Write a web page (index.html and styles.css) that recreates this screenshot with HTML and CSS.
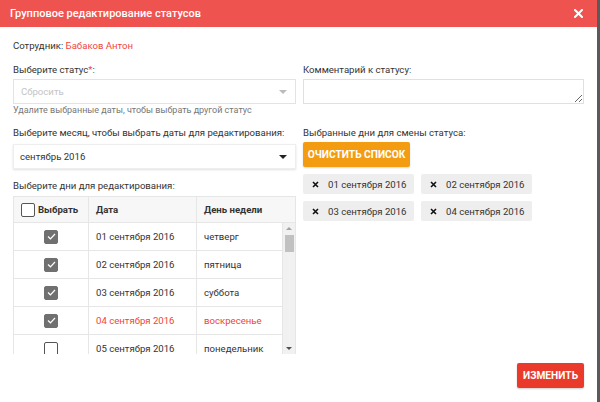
FILE: index.html
```html
<!DOCTYPE html>
<html lang="ru">
<head>
<meta charset="utf-8">
<link rel="stylesheet" href="styles.css">
</head>
<body>
<div class="modal">
  <div class="header">
    <div class="title">Групповое редактирование статусов</div>
    <svg class="close" width="9" height="9" viewBox="0 0 9 9"><path d="M1 1L8 8M8 1L1 8" stroke="#fff" stroke-width="2" stroke-linecap="square"/></svg>
  </div>
  <div class="content">
    <div class="employee">Сотрудник: <span class="red">Бабаков Антон</span></div>
    <div class="grid">
      <div class="col">
        <div class="label">Выберите статус<span class="red">*</span>:</div>
        <div class="select disabled"><span>Сбросить</span><span class="tri grey"></span></div>
        <div class="hint">Удалите выбранные даты, чтобы выбрать другой статус</div>
      </div>
      <div class="col">
        <div class="label">Комментарий к статусу:</div>
        <textarea class="textarea"></textarea>
      </div>
      <div class="col">
        <div class="label">Выберите месяц, чтобы выбрать даты для редактирования:</div>
        <div class="select month"><span>сентябрь 2016</span><span class="tri"></span></div>
        <div class="label days-label">Выберите дни для редактирования:</div>
        <div class="table">
          <div class="thead">
            <div class="c1 th"><span class="cb"></span>Выбрать</div>
            <div class="c2 th">Дата</div>
            <div class="c3h th">День недели</div>
          </div>
          <div class="tbody">
            <div class="rows">
              <div class="row"><div class="c1"><span class="cb checked"><svg width="9" height="7" viewBox="0 0 9 7"><path d="M1 3.5L3.4 5.8L8 1" fill="none" stroke="#fff" stroke-width="1.2"/></svg></span></div><div class="c2">01 сентября 2016</div><div class="c3">четверг</div></div>
              <div class="row"><div class="c1"><span class="cb checked"><svg width="9" height="7" viewBox="0 0 9 7"><path d="M1 3.5L3.4 5.8L8 1" fill="none" stroke="#fff" stroke-width="1.2"/></svg></span></div><div class="c2">02 сентября 2016</div><div class="c3">пятница</div></div>
              <div class="row"><div class="c1"><span class="cb checked"><svg width="9" height="7" viewBox="0 0 9 7"><path d="M1 3.5L3.4 5.8L8 1" fill="none" stroke="#fff" stroke-width="1.2"/></svg></span></div><div class="c2">03 сентября 2016</div><div class="c3">суббота</div></div>
              <div class="row weekend"><div class="c1"><span class="cb checked"><svg width="9" height="7" viewBox="0 0 9 7"><path d="M1 3.5L3.4 5.8L8 1" fill="none" stroke="#fff" stroke-width="1.2"/></svg></span></div><div class="c2">04 сентября 2016</div><div class="c3">воскресенье</div></div>
              <div class="row"><div class="c1"><span class="cb"></span></div><div class="c2">05 сентября 2016</div><div class="c3">понедельник</div></div>
            </div>
            <div class="scrollbar">
              <span class="arrow up"></span>
              <span class="thumb"></span>
              <span class="spacer"></span>
              <span class="arrow down"></span>
            </div>
          </div>
        </div>
      </div>
      <div class="col">
        <div class="label">Выбранные дни для смены статуса:</div>
        <div><button class="btn orange">ОЧИСТИТЬ СПИСОК</button></div>
        <div class="chips">
          <div class="chip"><svg class="x" width="7" height="7" viewBox="0 0 7 7"><path d="M1 1L6 6M6 1L1 6" stroke="#111" stroke-width="1.6"/></svg>01 сентября 2016</div>
          <div class="chip"><svg class="x" width="7" height="7" viewBox="0 0 7 7"><path d="M1 1L6 6M6 1L1 6" stroke="#111" stroke-width="1.6"/></svg>02 сентября 2016</div>
          <div class="chip"><svg class="x" width="7" height="7" viewBox="0 0 7 7"><path d="M1 1L6 6M6 1L1 6" stroke="#111" stroke-width="1.6"/></svg>03 сентября 2016</div>
          <div class="chip"><svg class="x" width="7" height="7" viewBox="0 0 7 7"><path d="M1 1L6 6M6 1L1 6" stroke="#111" stroke-width="1.6"/></svg>04 сентября 2016</div>
        </div>
      </div>
    </div>
    <div class="footer"><button class="btn redbtn">ИЗМЕНИТЬ</button></div>
  </div>
</div>
</body>
</html>
```
FILE: styles.css
```css
* { box-sizing: border-box; }
html, body { margin: 0; padding: 0; }
body {
  background: #5a5a5a;
  font-family: Roboto, "Liberation Sans", sans-serif;
  font-size: 9.6px;
  color: #333;
  width: 600px;
  height: 402px;
  overflow: hidden;
}
.modal {
  width: 597px;
  height: 402px;
  background: #fff;
  display: flex;
  flex-direction: column;
}
.header {
  height: 27px;
  background: #ef5350;
  display: flex;
  align-items: center;
  justify-content: space-between;
  padding: 0 14px 0 10px;
  flex: none;
}
.title { color: #fff; font-size: 11px; font-weight: 500; }
.close { display: block; }
.content {
  padding: 12px 13px 0 13px;
  flex: 1;
  display: flex;
  flex-direction: column;
}
.red { color: #f0483e; }
.employee { line-height: 14px; }
.grid {
  display: grid;
  grid-template-columns: 283px 281px;
  column-gap: 7px;
  margin-top: 10px;
}
.col { display: flex; flex-direction: column; }
.label { line-height: 14px; margin-bottom: 2px; }
.select {
  height: 25px;
  border: 1px solid #e3e3e3;
  display: flex;
  align-items: center;
  justify-content: space-between;
  padding: 0 8px 0 7px;
}
.select.disabled { color: #c4c4c4; }
.tri {
  width: 0; height: 0;
  border-left: 4px solid transparent;
  border-right: 4px solid transparent;
  border-top: 4px solid #222;
}
.tri.grey { border-top-color: #bbb; }
.hint { color: #777; font-size: 9px; line-height: 13px; margin-top: 0; }
.textarea {
  height: 25px;
  width: 281px;
  border: 1px solid #e0e0e0;
  resize: vertical;
  margin: 0;
  outline: none;
  font: inherit;
}
.col:nth-child(3), .col:nth-child(4) { margin-top: 9px; }
.month {
  margin-top: 2px;
  border: 1px solid #eee;
  box-shadow: 0 1px 2px rgba(0,0,0,0.12);
  color: #333;
  padding-left: 6px;
}
.days-label { margin-top: 10px; margin-bottom: 3px; }
.table { border: 1px solid #e6e6e6; border-bottom: none; }
.thead {
  display: flex;
  height: 26px;
  background: #f7f7f7;
  border-bottom: 1px solid #e6e6e6;
}
.th { font-weight: 700; color: #333; display: flex; align-items: center; }
.c1 { width: 75px; border-right: 1px solid #e6e6e6; display: flex; align-items: center; justify-content: center; }
.thead .c1 { justify-content: flex-start; padding-left: 7px; }
.c2 { width: 108px; border-right: 1px solid #e6e6e6; padding-left: 7px; display: flex; align-items: center; }
.c3 { flex: 1; padding-left: 7px; display: flex; align-items: center; }
.c3h { flex: 1; padding-left: 7px; }
.cb {
  width: 14px; height: 14px;
  border: 1px solid #555;
  border-radius: 2px;
  display: inline-flex;
  align-items: center;
  justify-content: center;
  background: #fff;
}
.thead .cb { margin-right: 3px; }
.cb.checked { background: #707070; border-color: #707070; }
.tbody { display: flex; height: 131px; overflow: hidden; }
.rows { flex: 1; }
.row { display: flex; height: 28px; border-bottom: 1px solid #e6e6e6; }
.row .c1, .row .c2, .row .c3 { height: 100%; }
.weekend .c2, .weekend .c3 { color: #f44336; }
.scrollbar {
  width: 13px;
  background: #f1f1f1;
  display: flex;
  flex-direction: column;
  align-items: center;
  border-left: 1px solid #e6e6e6;
}
.arrow {
  width: 0; height: 0;
  border-left: 3px solid transparent;
  border-right: 3px solid transparent;
  margin: 4px 0;
}
.arrow.up { border-bottom: 3px solid #a3a3a3; }
.arrow.down { border-top: 3px solid #505050; margin-bottom: 4px; }
.thumb { width: 9px; height: 17px; background: #c1c1c1; margin-top: 1px; }
.spacer { flex: 1; }
.btn {
  border: none;
  color: #fff;
  font-family: inherit;
  font-weight: 700;
  font-size: 10.2px;
  border-radius: 2px;
  height: 25px;
  padding: 0;
  white-space: nowrap;
}
.orange { background: #f39c12; width: 107px; box-shadow: 0 1px 2px rgba(0,0,0,0.15); }
.chips {
  display: grid;
  grid-template-columns: 111px 111px;
  column-gap: 7px;
  row-gap: 7px;
  margin-top: 7px;
}
.chip {
  height: 20px;
  background: #eeeeee;
  border-radius: 2px;
  display: flex;
  align-items: center;
  padding-left: 9px;
  color: #333;
  white-space: nowrap;
}
.chip .x { margin-right: 9px; flex: none; }
.footer {
  margin-top: auto;
  display: flex;
  justify-content: flex-end;
  padding-bottom: 14px;
}
.redbtn { background: #ea3a2c; width: 67px; box-shadow: 0 1px 2px rgba(0,0,0,0.2); }
```
